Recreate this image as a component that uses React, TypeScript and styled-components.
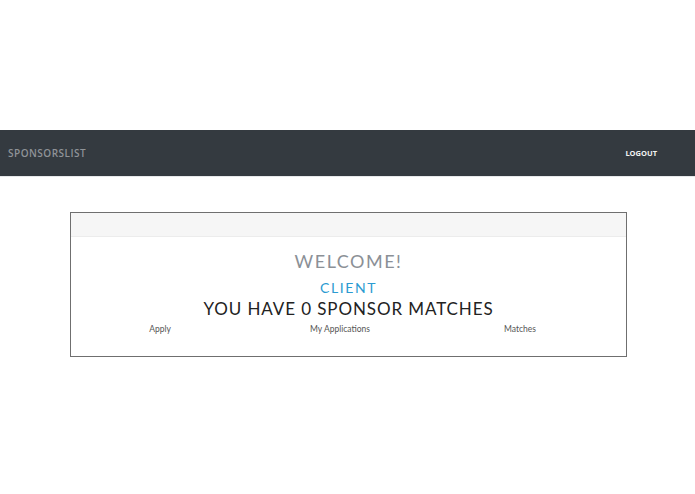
import React from "react";
import styled, { createGlobalStyle } from "styled-components";

const Global = createGlobalStyle`
  html, body { margin: 0; padding: 0; background: #fff; }
  body { font-family: "Lato", "Open Sans", sans-serif; }
`;

const Page = styled.div`
  padding-top: 130px;
`;

const NavBar = styled.nav`
  height: 46px;
  background: #343a40;
  display: flex;
  align-items: center;
  justify-content: space-between;
  padding: 0 38px 0 8px;
  border-bottom: 1px solid #e6e8ea;
`;

const Brand = styled.span`
  font-family: "Open Sans", sans-serif;
  font-size: 10px;
  font-weight: 600;
  letter-spacing: 0.5px;
  color: #8f9398;
`;

const NavLink = styled.span`
  font-family: "Open Sans", sans-serif;
  font-size: 7.5px;
  font-weight: 700;
  color: #f2f2f2;
`;

const Main = styled.main`
  padding: 35px 0 0 70px;
`;

const Card = styled.section`
  width: 555px;
  border: 1px solid #6f6f6f;
  background: #fff;
`;

const CardHeader = styled.div`
  height: 23px;
  background: #f6f6f6;
  border-bottom: 1px solid #ececec;
`;

const CardBody = styled.div`
  display: flex;
  flex-direction: column;
  align-items: center;
  padding: 12px 0 21px;
`;

const Title = styled.h1<{ $size: number; $color: string; $spacing: number; $lh: number; $mt?: number }>`
  margin: ${(p) => p.$mt ?? 0}px 0 0;
  font-family: "Lato", sans-serif;
  font-weight: 400;
  font-size: ${(p) => p.$size}px;
  color: ${(p) => p.$color};
  letter-spacing: ${(p) => p.$spacing}px;
  line-height: ${(p) => p.$lh}px;
`;

const Links = styled.div`
  align-self: flex-start;
  margin-left: -1px;
  margin-top: 3px;
  display: grid;
  grid-template-columns: repeat(3, 180px);
  line-height: 12px;
`;

const LinkItem = styled.a`
  text-align: center;
  font-family: "Lato", sans-serif;
  font-size: 8.5px;
  color: #555;
  text-decoration: none;
`;

export default function App() {
  return (
    <>
      <Global />
      <Page>
        <NavBar>
          <Brand>SPONSORSLIST</Brand>
          <NavLink>LOGOUT</NavLink>
        </NavBar>
        <Main>
          <Card>
            <CardHeader />
            <CardBody>
              <Title $size={18} $color="#8b9096" $spacing={1.5} $lh={24}>WELCOME!</Title>
              <Title $size={14} $color="#2c9bd1" $spacing={1.6} $lh={20} $mt={5}>CLIENT</Title>
              <Title $size={17} $color="#222" $spacing={0.9} $lh={22}>YOU HAVE 0 SPONSOR MATCHES</Title>
              <Links>
                <LinkItem>Apply</LinkItem>
                <LinkItem>My Applications</LinkItem>
                <LinkItem>Matches</LinkItem>
              </Links>
            </CardBody>
          </Card>
        </Main>
      </Page>
    </>
  );
}
